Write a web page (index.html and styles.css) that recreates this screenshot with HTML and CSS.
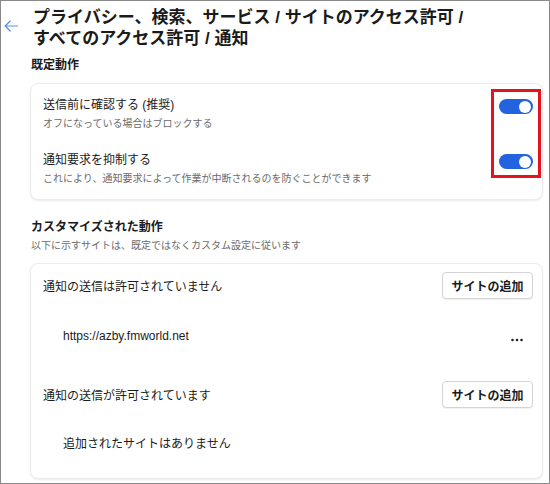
FILE: index.html
```html
<!DOCTYPE html>
<html lang="ja">
<head>
<meta charset="utf-8">
<link rel="stylesheet" href="styles.css">
</head>
<body>
<div class="frame">
  <div class="header">
    <svg class="back" width="14" height="12" viewBox="0 0 14 12">
      <path d="M13.5 6H1.2M6.2 1L1.2 6L6.2 11" fill="none" stroke="#5a8ee8" stroke-width="1.2" stroke-linecap="round" stroke-linejoin="round"/>
    </svg>
    <h1 class="title">プライバシー、検索、サービス / サイトのアクセス許可 /<br>すべてのアクセス許可 / 通知</h1>
  </div>
  <div class="main">
    <h2 class="section-head first">既定動作</h2>
    <div class="card card-default">
      <div class="row">
        <div class="text">
          <div class="label">送信前に確認する (推奨)</div>
          <div class="sub">オフになっている場合はブロックする</div>
        </div>
        <div class="toggle"><span class="knob"></span></div>
      </div>
      <div class="row row-second">
        <div class="text">
          <div class="label">通知要求を抑制する</div>
          <div class="sub">これにより、通知要求によって作業が中断されるのを防ぐことができます</div>
        </div>
        <div class="toggle"><span class="knob"></span></div>
      </div>
    </div>

    <h2 class="section-head second">カスタマイズされた動作</h2>
    <div class="sub section-sub">以下に示すサイトは、既定ではなくカスタム設定に従います</div>
    <div class="card card-custom">
      <div class="list-head">
        <div class="label">通知の送信は許可されていません</div>
        <button class="btn">サイトの追加</button>
      </div>
      <div class="site-row">
        <span class="site">https://azby.fmworld.net</span>
        <svg class="more" width="12" height="4" viewBox="0 0 12 4">
          <circle cx="1.5" cy="2" r="1.3" fill="#222"/>
          <circle cx="6" cy="2" r="1.3" fill="#222"/>
          <circle cx="10.5" cy="2" r="1.3" fill="#222"/>
        </svg>
      </div>
      <div class="list-head list-head-second">
        <div class="label">通知の送信が許可されています</div>
        <button class="btn">サイトの追加</button>
      </div>
      <div class="empty">追加されたサイトはありません</div>
    </div>
  </div>
  <div class="highlight"></div>
</div>
</body>
</html>
```

FILE: styles.css
```css
* { box-sizing: border-box; }
html, body { margin: 0; padding: 0; background: #fff; }
.frame {
  position: relative;
  width: 550px;
  height: 484px;
  border: 1px solid #8a8a8a;
  background: #fff;
  overflow: hidden;
  font-family: "Liberation Sans", "Noto Sans CJK JP", sans-serif;
  color: #1b1b1b;
}
.header {
  display: flex;
  align-items: flex-start;
  padding: 6px 0 0 3px;
}
.back {
  flex: none;
  margin-top: 13px;
  margin-right: 15px;
}
.title {
  margin: 0;
  font-size: 17px;
  font-weight: 700;
  line-height: 21px;
}
.main {
  margin-left: 29px;
  width: 513px;
}
.section-head {
  margin: 0;
  padding-left: 1px;
  font-size: 12px;
  font-weight: 700;
  line-height: 18px;
}
.section-head.first { margin-top: 7px; }
.section-head.second { margin-top: 18px; }
.card {
  background: #fff;
  border: 1px solid #ebebeb;
  border-radius: 8px;
  box-shadow: 0 1px 2px rgba(0,0,0,0.08);
}
.card-default {
  margin-top: 9px;
  padding: 12px 9px 12px 12px;
}
.row {
  display: flex;
  justify-content: space-between;
  align-items: flex-start;
}
.row-second { margin-top: 19px; }
.label {
  font-size: 12px;
  line-height: 18px;
}
.sub {
  font-size: 10px;
  line-height: 16px;
  color: #6b6b6b;
  margin-top: 2px;
}
.section-sub {
  padding-left: 1px;
}
.toggle {
  position: relative;
  flex: none;
  width: 34px;
  height: 15px;
  margin-top: 3px;
  border-radius: 8px;
  background: #2463de;
}
.knob {
  position: absolute;
  right: 2px;
  top: 1.5px;
  width: 12px;
  height: 12px;
  border-radius: 50%;
  background: #fff;
}
.card-custom {
  margin-top: 9px;
  padding: 8px 9px 25px 12px;
}
.list-head {
  display: flex;
  justify-content: space-between;
  align-items: center;
}
.list-head .label { margin-top: 2px; }
.list-head-second { margin-top: 36px; }
.btn {
  width: 91px;
  height: 27px;
  padding: 0;
  background: #fff;
  border: 1px solid #d4d4d4;
  border-radius: 4px;
  font-family: "Liberation Sans", "Noto Sans CJK JP", sans-serif;
  font-size: 12px;
  font-weight: 700;
  color: #1b1b1b;
  box-shadow: 0 1px 1px rgba(0,0,0,0.06);
}
.site-row {
  display: flex;
  justify-content: space-between;
  align-items: center;
  margin-top: 28px;
  padding-left: 20px;
  padding-right: 10px;
  height: 18px;
}
.site {
  font-size: 12px;
  line-height: 18px;
}
.more { margin-top: 8px; }
.empty {
  margin-top: 27px;
  padding-left: 20px;
  font-size: 12px;
  line-height: 18px;
}
.highlight {
  position: absolute;
  left: 490px;
  top: 88px;
  width: 50px;
  height: 89px;
  border: 3px solid #e5131d;
}
```
